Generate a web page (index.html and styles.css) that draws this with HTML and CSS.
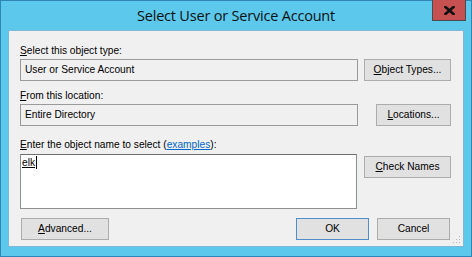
FILE: index.html
```html
<!DOCTYPE html>
<html>
<head>
<meta charset="utf-8">
<link rel="stylesheet" href="styles.css">
</head>
<body>
<div class="window">
  <div class="titlebar">
    <div class="title">Select User or Service Account</div>
    <div class="close">
      <svg width="11" height="9" viewBox="0 0 11 9"><path d="M1.5 1 L9.5 8 M9.5 1 L1.5 8" stroke="#111" stroke-width="2.6" stroke-linecap="square"/></svg>
    </div>
  </div>
  <div class="content">
    <div class="label lbl1"><u>S</u>elect this object type:</div>
    <div class="row">
      <div class="field">User or Service Account</div>
      <div class="btn btn-obj"><u>O</u>bject Types...</div>
    </div>
    <div class="label lbl2"><u>F</u>rom this location:</div>
    <div class="row">
      <div class="field">Entire Directory</div>
      <div class="btn btn-loc"><u>L</u>ocations...</div>
    </div>
    <div class="label lbl3"><u>E</u>nter the object name to select (<span class="link">examples</span>):</div>
    <div class="row top">
      <div class="area"><span class="entry">elk</span><span class="caret"></span></div>
      <div class="btn btn-check"><u>C</u>heck Names</div>
    </div>
    <div class="footer">
      <div class="btn btn-adv"><u>A</u>dvanced...</div>
      <div class="spacer"></div>
      <div class="btn btn-ok">OK</div>
      <div class="btn btn-cancel">Cancel</div>
    </div>
    <div class="grip">
      <svg width="8" height="8" viewBox="0 0 8 8" fill="#b8b8b8"><rect x="6" y="0" width="1" height="1"/><rect x="3" y="3" width="1" height="1"/><rect x="6" y="3" width="1" height="1"/><rect x="0" y="6" width="1" height="1"/><rect x="3" y="6" width="1" height="1"/><rect x="6" y="6" width="1" height="1"/></svg>
    </div>
  </div>
</div>
</body>
</html>
```
FILE: styles.css
```css
html, body {
  margin: 0;
  padding: 0;
}
body {
  width: 472px;
  height: 257px;
  overflow: hidden;
  font-family: "Liberation Sans", Arial, sans-serif;
  font-size: 10.2px;
  color: #000;
}
.window {
  width: 472px;
  height: 257px;
  box-sizing: border-box;
  background: #5bc8ec;
  border: 1px solid #2f86b5;
  display: flex;
  flex-direction: column;
  padding: 0 7px 9px 7px;
}
.titlebar {
  height: 29px;
  flex: none;
  display: flex;
  align-items: center;
  justify-content: center;
  position: relative;
}
.title {
  font-family: "Open Sans", "Noto Sans", sans-serif;
  font-size: 14.5px;
  color: #111;
  margin-top: -1px;
  letter-spacing: -0.2px;
}
.close {
  position: absolute;
  right: -2px;
  top: -1px;
  width: 34px;
  height: 21px;
  box-sizing: border-box;
  background: #c75050;
  border: 1px solid #4b4b4b;
  border-top: none;
  display: flex;
  align-items: center;
  justify-content: center;
}
.content {
  flex: 1;
  background: #f0f0f0;
  border: 1px solid #7fb8d8;
  position: relative;
  padding: 0 0 0 11px;
  display: flex;
  flex-direction: column;
}
.label {
  height: 13px;
  line-height: 13px;
  white-space: nowrap;
}
.lbl1 { margin-top: 13px; margin-bottom: 2px; }
.lbl2 { margin-top: 8px; margin-bottom: 2px; }
.lbl3 { margin-top: 12px; margin-bottom: 3px; }
.row {
  display: flex;
  align-items: center;
}
.row.top {
  align-items: flex-start;
}
.field {
  width: 338px;
  height: 22px;
  box-sizing: border-box;
  border: 1px solid #9a9a9a;
  background: #f0f0f0;
  padding: 0 4px;
  line-height: 20px;
  white-space: nowrap;
}
.btn {
  box-sizing: border-box;
  height: 22px;
  line-height: 20px;
  border: 1px solid #acacac;
  background: #e1e1e1;
  text-align: center;
  white-space: nowrap;
}
.btn-obj { width: 87px; margin-left: 6px; }
.btn-loc { width: 75px; margin-left: 18px; }
.btn-check { width: 87px; margin-left: 7px; margin-top: 2px; }
.area {
  width: 337px;
  height: 55px;
  box-sizing: border-box;
  border: 1px solid #8e8f8f;
  border-top-color: #6f6f6f;
  background: #fff;
  padding: 1px 1px;
  display: flex;
  align-items: flex-start;
  line-height: 13px;
}
.entry {
  text-decoration: underline;
}
.caret {
  width: 1px;
  height: 13px;
  background: #000;
  margin-left: 1px;
}
.footer {
  display: flex;
  margin-top: 9px;
  padding-left: 1px;
}
.btn-adv { width: 88px; }
.spacer { flex: 1; }
.btn-ok {
  width: 73px;
  border-color: #4f8ec8;
}
.btn-cancel { width: 73px; margin-left: 8px; margin-right: 13px; }
.link {
  color: #0066cc;
  text-decoration: underline;
}
.grip {
  position: absolute;
  right: 2px;
  bottom: 2px;
  width: 8px;
  height: 8px;
  display: flex;
}
```
